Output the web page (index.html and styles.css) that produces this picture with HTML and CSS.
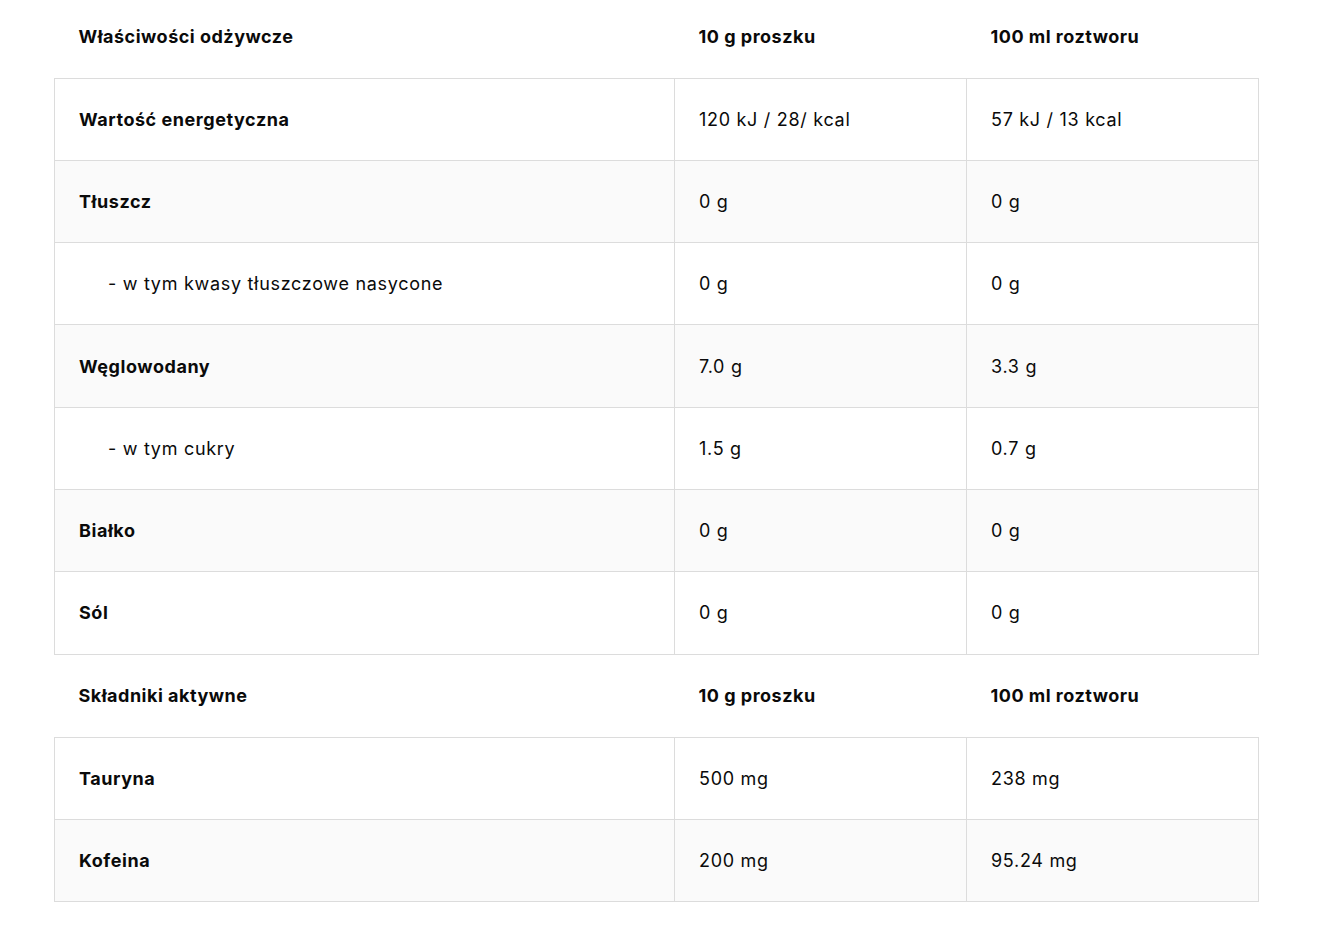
FILE: index.html
```html
<!DOCTYPE html>
<html lang="pl">
<head>
<meta charset="utf-8">
<link rel="stylesheet" href="styles.css">
</head>
<body>
<div class="wrap">
<table class="nt">
  <colgroup><col class="c1"><col class="c2"><col class="c3"></colgroup>
  <thead>
    <tr class="head first"><th>Właściwości odżywcze</th><th>10 g proszku</th><th>100 ml roztworu</th></tr>
  </thead>
  <tbody>
    <tr><td class="b">Wartość energetyczna</td><td>120 kJ / 28/ kcal</td><td>57 kJ / 13 kcal</td></tr>
    <tr class="alt"><td class="b">Tłuszcz</td><td>0 g</td><td>0 g</td></tr>
    <tr><td class="sub">- w tym kwasy tłuszczowe nasycone</td><td>0 g</td><td>0 g</td></tr>
    <tr class="alt"><td class="b">Węglowodany</td><td>7.0 g</td><td>3.3 g</td></tr>
    <tr><td class="sub">- w tym cukry</td><td>1.5 g</td><td>0.7 g</td></tr>
    <tr class="alt"><td class="b">Białko</td><td>0 g</td><td>0 g</td></tr>
    <tr><td class="b">Sól</td><td>0 g</td><td>0 g</td></tr>
  </tbody>
  <thead>
    <tr class="head"><th>Składniki aktywne</th><th>10 g proszku</th><th>100 ml roztworu</th></tr>
  </thead>
  <tbody>
    <tr><td class="b">Tauryna</td><td>500 mg</td><td>238 mg</td></tr>
    <tr class="alt"><td class="b">Kofeina</td><td>200 mg</td><td>95.24 mg</td></tr>
  </tbody>
</table>
</div>
</body>
</html>
```
FILE: styles.css
```css
html, body {
  margin: 0;
  padding: 0;
  background: #fff;
}
body {
  font-family: "Inter", "Noto Sans", sans-serif;
  color: #0a0a0a;
}
.wrap {
  padding-left: 54px;
}
.nt {
  width: 1204px;
  border-collapse: collapse;
  table-layout: fixed;
  font-size: 18px;
  letter-spacing: 0.7px;
}
.c1 { width: 620px; }
.c2 { width: 292px; }
.c3 { width: 292px; }
.nt th, .nt td {
  text-align: left;
  padding: 0 24px;
  vertical-align: middle;
}
.nt th {
  font-weight: 700;
  letter-spacing: 0.5px;
  border: none;
}
.head { height: 83px; }
.head.first { height: 78px; }
.head.first th { padding-bottom: 4px; }
.nt td {
  border: 1px solid #dcdcdc;
  font-weight: 400;
}
.nt tbody tr { height: 82.3px; }
.nt tbody tr.alt { background: #fafafa; }
.nt td.b {
  font-weight: 700;
  letter-spacing: 0.55px;
}
.nt td.sub { padding-left: 53px; }
```
